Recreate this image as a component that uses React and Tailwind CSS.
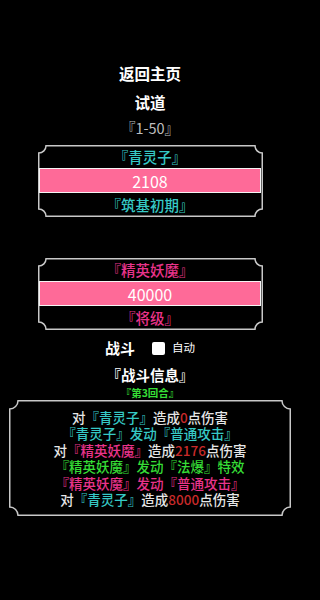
import React from "react";

const CYAN = "text-[#36c9c6]";
const PINK = "text-[#e8338a]";
const RED = "text-[#c82a2a]";
const GREEN = "text-[#36dc36]";

// Notched frame: concave corners drawn as an SVG outline behind the content
const Frame = ({ w, h, r, className, children }) => {
  const o = 0.75;
  const d = `M ${r} ${o} H ${w - r} A ${r - o} ${r - o} 0 0 0 ${w - o} ${r} V ${h - r} A ${r - o} ${r - o} 0 0 0 ${w - r} ${h - o} H ${r} A ${r - o} ${r - o} 0 0 0 ${o} ${h - r} V ${r} A ${r - o} ${r - o} 0 0 0 ${r} ${o} Z`;
  return (
    <div className={`relative ${className}`} style={{ width: w, height: h }}>
      <svg
        className="absolute inset-0"
        width={w}
        height={h}
        viewBox={`0 0 ${w} ${h}`}
      >
        <path d={d} fill="none" stroke="#c8c8c8" strokeWidth="1.5" />
      </svg>
      <div className="relative h-full">{children}</div>
    </div>
  );
};

const UnitCard = ({ name, value, rank, color, className }) => (
  <Frame w={225} h={72} r={8} className={className}>
    <div className="flex h-full flex-col">
      <div className={`flex h-[23px] items-center justify-center text-[14.5px] font-medium ${color}`}>
        {name}
      </div>
      <div className="mx-[1.5px] flex h-[25px] items-center justify-center border-[1.5px] border-[#f4f4f4] bg-[#fe6a98] text-[16px] text-white">
        {value}
      </div>
      <div className={`flex h-[24px] items-center justify-center text-[14.5px] font-medium ${color}`}>
        {rank}
      </div>
    </div>
  </Frame>
);

const App = () => {
  return (
    <div className="min-h-[600px] w-full bg-black">
      <div
        className="flex w-[300px] flex-col items-center pt-[58px] text-white [text-spacing-trim:space-all]"
        style={{ fontFamily: '"Noto Sans CJK SC", "Noto Sans", sans-serif' }}
      >
        <div className="text-[15.5px] font-bold leading-[30px]">返回主页</div>
        <div className="text-[15.5px] font-bold leading-[28px]">试道</div>
        <div className="text-[14.5px] leading-[24px] text-[#bdbdbd]">『1-50』</div>

        <UnitCard
          className="mt-[5px]"
          name="『青灵子』"
          value="2108"
          rank="『筑基初期』"
          color={CYAN}
        />
        <UnitCard
          className="mt-[41px]"
          name="『精英妖魔』"
          value="40000"
          rank="『将级』"
          color={PINK}
        />

        <div className="mt-[8px] flex h-[20px] items-center">
          <span className="text-[15px] font-bold">战斗</span>
          <span className="ml-[17px] h-[13px] w-[13px] rounded-[2px] bg-white" />
          <span className="ml-[7px] text-[11.5px]">自动</span>
        </div>

        <div className="mt-[7px] flex h-[20px] items-center text-[14.5px] font-bold">
          『战斗信息』
        </div>
        <div className={`mt-[1px] text-[10.5px] font-bold leading-[14px] ${GREEN}`}>
          『第3回合』
        </div>

        <Frame w={282} h={116} r={9}>
          <div className="flex flex-col items-center pt-[8.5px] text-[13.5px] font-medium leading-[16.5px] text-[#e6e6e6]">
            <div>
              对<span className={CYAN}>『青灵子』</span>造成<span className={RED}>0</span>点伤害
            </div>
            <div className={CYAN}>『青灵子』发动『普通攻击』</div>
            <div>
              对<span className={PINK}>『精英妖魔』</span>造成<span className={RED}>2176</span>点伤害
            </div>
            <div className={GREEN}>『精英妖魔』发动『法爆』特效</div>
            <div className={PINK}>『精英妖魔』发动『普通攻击』</div>
            <div>
              对<span className={CYAN}>『青灵子』</span>造成<span className={RED}>8000</span>点伤害
            </div>
          </div>
        </Frame>
      </div>
    </div>
  );
};

export default App;
